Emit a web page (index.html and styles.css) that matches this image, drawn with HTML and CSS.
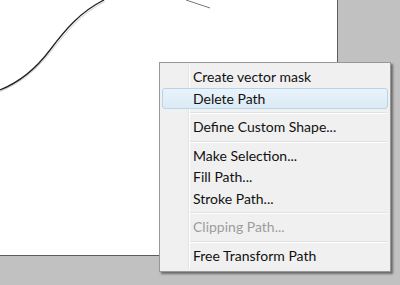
FILE: index.html
```html
<!DOCTYPE html>
<html>
<head>
<meta charset="utf-8">
<link rel="stylesheet" href="styles.css">
</head>
<body>
<div class="stage">
  <div class="canvas">
    <svg class="art" width="337" height="255" viewBox="0 0 337 255">
      <path d="M0,90 C20,82 35,70 50,50 S80,12 104,0" fill="none" stroke="#222" stroke-width="1.3"/>
      <path d="M0,91.5 C20,83.5 35,71.5 51,51.5 S81,13.5 105,1.5" fill="none" stroke="#999" stroke-width="0.8" opacity="0.6"/>
      <path d="M186,0 L210,8" fill="none" stroke="#777" stroke-width="1"/>
    </svg>
  </div>
  <div class="menu">
    <div class="item">Create vector mask</div>
    <div class="item active">Delete Path</div>
    <div class="sep"></div>
    <div class="item">Define Custom Shape...</div>
    <div class="sep"></div>
    <div class="item">Make Selection...</div>
    <div class="item">Fill Path...</div>
    <div class="item">Stroke Path...</div>
    <div class="sep"></div>
    <div class="item disabled">Clipping Path...</div>
    <div class="sep"></div>
    <div class="item">Free Transform Path</div>
  </div>
</div>
</body>
</html>
```
FILE: styles.css
```css
html, body {
  margin: 0;
  padding: 0;
}
body {
  width: 400px;
  height: 285px;
  overflow: hidden;
  background: #c1c1c1;
  font-family: "Lato", "Open Sans", sans-serif;
}
.stage {
  position: relative;
  width: 400px;
  height: 285px;
}
.canvas {
  width: 337px;
  height: 255px;
  background: #ffffff;
  border-right: 1px solid #5c5c5c;
  border-bottom: 1px solid #5c5c5c;
  position: relative;
}
.art {
  position: absolute;
  left: 0;
  top: 0;
}
.menu {
  position: absolute;
  left: 159px;
  top: 62px;
  width: 232px;
  height: 210px;
  box-sizing: border-box;
  background: #f0f0f0;
  border: 1px solid #979797;
  padding: 3px 2px 0 2px;
  box-shadow: 2px 2px 2px rgba(0, 0, 0, 0.45);
  display: flex;
  flex-direction: column;
}
.menu::before {
  content: "";
  position: absolute;
  left: 28px;
  top: 2px;
  bottom: 2px;
  width: 1px;
  background: #e2e3e3;
  box-shadow: 1px 0 0 #ffffff;
}
.item {
  height: 21.5px;
  line-height: 21.5px;
  padding-left: 31px;
  font-size: 14px;
  color: #111;
  box-sizing: border-box;
  position: relative;
  z-index: 1;
  white-space: nowrap;
}
.item.active {
  background: linear-gradient(#eaf3fb, #dbeaf5);
  border: 1px solid #b3d6ec;
  border-radius: 3px;
  line-height: 19.5px;
  padding-left: 30px;
}
.item.disabled {
  color: #9d9d9d;
}
.sep {
  height: 7px;
  display: flex;
  align-items: center;
  padding-left: 28px;
  padding-right: 1px;
}
.sep::after {
  content: "";
  flex: 1;
  height: 1px;
  background: #e0e0e0;
  box-shadow: 0 1px 0 #ffffff;
}
```
